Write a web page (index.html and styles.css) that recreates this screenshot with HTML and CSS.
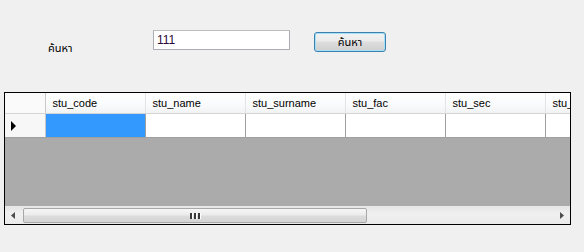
FILE: index.html
```html
<!DOCTYPE html>
<html>
<head>
  <title>ค้นหา</title>
  <link rel="stylesheet" href="styles.css">
</head>
<body>
  <div class="search-bar">
    <label class="search-label" for="keyword">ค้นหา</label>
    <input class="search-input" type="text" id="keyword" value="111">
    <button class="search-button">ค้นหา</button>
  </div>

  <div class="grid">
    <div class="grid-body">
      <table class="grid-table">
        <colgroup>
          <col class="col-rowhead">
          <col class="col-data">
          <col class="col-data">
          <col class="col-data">
          <col class="col-data">
          <col class="col-data">
          <col class="col-data">
        </colgroup>
        <thead>
          <tr>
            <th class="corner"></th>
            <th>stu_code</th>
            <th>stu_name</th>
            <th>stu_surname</th>
            <th>stu_fac</th>
            <th>stu_sec</th>
            <th>stu_year</th>
          </tr>
        </thead>
        <tbody>
          <tr>
            <td class="row-head"><span class="arrow"></span></td>
            <td class="selected"></td>
            <td></td>
            <td></td>
            <td></td>
            <td></td>
            <td></td>
          </tr>
        </tbody>
      </table>
    </div>
    <div class="hscroll">
      <div class="scroll-btn">
        <svg width="5" height="7" viewBox="0 0 5 7"><path d="M4 0 L0 3.5 L4 7 Z" fill="#4d4d4d"/></svg>
      </div>
      <div class="scroll-track">
        <div class="scroll-thumb">
          <span class="grip"></span><span class="grip"></span><span class="grip"></span>
        </div>
      </div>
      <div class="scroll-btn">
        <svg width="5" height="7" viewBox="0 0 5 7"><path d="M1 0 L5 3.5 L1 7 Z" fill="#4d4d4d"/></svg>
      </div>
    </div>
  </div>
</body>
</html>
```

FILE: styles.css
```css
body {
  margin: 0;
  background-color: #f0f0f0;
  font-family: "Liberation Sans", Tahoma, "Noto Sans Thai", sans-serif;
  font-size: 11px;
  color: #000;
}

.search-bar {
  display: flex;
  align-items: flex-start;
  height: 92px;
  padding-top: 30px;
  box-sizing: border-box;
}

.search-label {
  margin-left: 48px;
  margin-top: 10px;
  width: 105px;
  font-size: 11px;
}

.search-input {
  width: 137px;
  height: 20px;
  box-sizing: border-box;
  border: 1px solid #abadb3;
  border-top-color: #bdbdbd;
  padding: 0 3px;
  font-family: inherit;
  font-size: 12px;
  color: #2c0738;
  background: #fff;
  outline: none;
}

.search-button {
  margin-left: 24px;
  margin-top: 2px;
  width: 72px;
  height: 20px;
  border: 1px solid #3c7fb1;
  border-radius: 3px;
  background: linear-gradient(#f2f2f2 0%, #ebebeb 45%, #dddddd 50%, #cfcfcf 100%);
  box-shadow: inset 0 0 0 1px #a6e0f7;
  font-family: inherit;
  font-size: 11px;
  padding: 0;
  color: #000;
}

.grid {
  margin-left: 4px;
  width: 567px;
  height: 133px;
  box-sizing: border-box;
  border: 1px solid #000;
  background-color: #ababab;
  display: flex;
  flex-direction: column;
}

.grid-body {
  flex: 1;
  overflow: hidden;
}

.grid-table {
  table-layout: fixed;
  border-collapse: collapse;
  width: 640px;
}

.col-rowhead {
  width: 40px;
}

.col-data {
  width: 100px;
}

.grid-table th {
  height: 20px;
  padding: 0 0 0 7px;
  text-align: left;
  font-weight: normal;
  background: linear-gradient(#ffffff 0%, #f9fafb 60%, #f1f2f4 100%);
  border-right: 1px solid #e3e4e6;
  border-bottom: 1px solid #d5d5d5;
  white-space: nowrap;
  overflow: hidden;
}

.grid-table th.corner {
  padding: 0;
  background: #fafafa;
  border-right: 1px solid #c8c8c8;
}

.grid-table td {
  height: 23px;
  padding: 0;
  background: #fff;
  border-right: 1px solid #a0a0a0;
  border-bottom: 1px solid #a0a0a0;
}

.grid-table td.row-head {
  background: #f7f7f7;
  border-right: 1px solid #c8c8c8;
}

.grid-table td.selected {
  background: #3399ff;
}

.arrow {
  display: block;
  margin-left: 6px;
  width: 0;
  height: 0;
  border-top: 5px solid transparent;
  border-bottom: 5px solid transparent;
  border-left: 5px solid #000;
}

.hscroll {
  display: flex;
  height: 17px;
  background: linear-gradient(#e6e6e6, #f0f0f0 40%, #eaeaea);
  border-top: 1px solid #e8e8e8;
}

.scroll-btn {
  width: 17px;
  display: flex;
  align-items: center;
  justify-content: center;
}

.scroll-track {
  flex: 1;
  padding: 1px 0;
}

.scroll-thumb {
  width: 344px;
  height: 15px;
  box-sizing: border-box;
  margin-left: 1px;
  border: 1px solid #a8a8a8;
  border-radius: 2px;
  background: linear-gradient(#f6f6f6 0%, #ececec 45%, #dcdcdc 55%, #d4d4d4 100%);
  display: flex;
  align-items: center;
  justify-content: center;
  gap: 1px;
}

.grip {
  width: 2px;
  height: 6px;
  background: #3a3a3a;
  border-right: 1px solid #fff;
}
```
